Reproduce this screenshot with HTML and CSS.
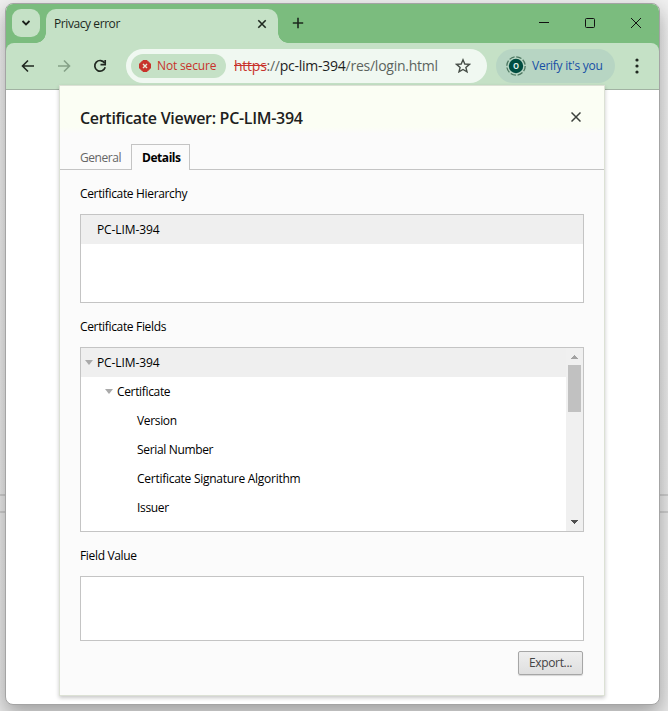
FILE: index.html
```html
<!DOCTYPE html>
<html lang="en">
<head>
<meta charset="utf-8">
<title>Privacy error</title>
<link rel="stylesheet" href="styles.css">
</head>
<body>
<div class="window">
  <div class="titlebar">
    <button class="tab-search" aria-label="Search tabs"><svg width="28" height="28" viewBox="0 0 28 28"><path d="M10.500 12l3.500 3.500 3.500-3.500" fill="none" stroke="#1c211c" stroke-width="1.800"/></svg></button>
    <div class="tab">
      <span class="tab-title">Privacy error</span>
      <svg width="10" height="10" viewBox="0 0 10 10"><path d="M1.300 1.300l7.400 7.400M8.700 1.300L1.300 8.700" stroke="#1f2a20" stroke-width="1.600"/></svg>
    </div>
    <svg class="new-tab" width="12" height="12" viewBox="0 0 12 12"><path d="M6 .8v10.400M.8 6h10.400" stroke="#1c281d" stroke-width="1.600"/></svg>
    <div class="controls">
      <svg width="46" height="39" viewBox="0 0 46 39"><path d="M18 18.500h10" stroke="#111"/></svg>
      <svg width="46" height="39" viewBox="0 0 46 39"><rect x="18.500" y="14.500" width="9" height="9" rx="1" fill="none" stroke="#111"/></svg>
      <svg width="46" height="39" viewBox="0 0 46 39"><path d="M18 14l10 10M28 14L18 24" stroke="#111"/></svg>
    </div>
  </div>
  <div class="toolbar">
    <svg class="nav" width="14" height="14" viewBox="0 0 14 14"><path d="M13 7H2M7 1.500L1.500 7 7 12.500" fill="none" stroke="#202820" stroke-width="1.600"/></svg>
    <svg class="nav" width="14" height="14" viewBox="0 0 14 14"><path d="M1 7h11M7 1.500L12.500 7 7 12.500" fill="none" stroke="#85a187" stroke-width="1.600"/></svg>
    <svg class="nav" width="14" height="14" viewBox="0 0 14 14"><path d="M11.600 4A5.300 5.300 0 1 0 12.200 8.300" fill="none" stroke="#202820" stroke-width="1.700"/><path d="M12.200 1v4.700H7.500" fill="none" stroke="#202820" stroke-width="1.700"/></svg>
    <div class="omnibox">
      <div class="chip">
        <svg width="12" height="12" viewBox="0 0 12 12"><path d="M4 .5h4L11.500 4v4L8 11.500H4L.5 8V4z" fill="#c8322b" stroke="#c8322b" stroke-linejoin="round"/><path d="M4 4l4 4M8 4L4 8" stroke="#e6ead9" stroke-width="1.400"/></svg>
        <span>Not secure</span>
      </div>
      <span class="url"><s>https</s><i>://</i>pc-lim-394<i>/res/login.html</i></span>
      <svg class="star" width="16" height="16" viewBox="0 0 16 16"><path d="M8 1.800l1.800 4.200 4.600.4-3.500 3 1.100 4.500L8 11.500l-4 2.400 1.100-4.500-3.500-3 4.600-.4z" fill="none" stroke="#464d47" stroke-width="1.400"/></svg>
    </div>
    <div class="profile">
      <svg width="20" height="20" viewBox="0 0 20 20"><circle cx="10" cy="10" r="9.200" fill="none" stroke="#4c7660" stroke-width="1.300" stroke-dasharray="5.500 1.720"/><circle cx="10" cy="10" r="7.200" fill="#004d40"/><text x="10" y="13" text-anchor="middle">o</text></svg>
      <span>Verify it's you</span>
    </div>
    <svg class="menu" width="4" height="16" viewBox="0 0 4 16"><g fill="#202820"><circle cx="2" cy="2" r="1.600"/><circle cx="2" cy="8" r="1.600"/><circle cx="2" cy="14" r="1.600"/></g></svg>
  </div>
</div>
<div class="dialog">
  <div class="dialog-header"><h1>Certificate Viewer: PC-LIM-394</h1>
    <svg width="10" height="10" viewBox="0 0 10 10"><path d="M.5.5l9 9M9.500.5l-9 9" stroke="#3c413c" stroke-width="1.500"/></svg></div>
  <div class="tabs"><span class="general">General</span><span class="details">Details</span></div>
  <div class="content">
    <div class="label"><span>Certificate Hierarchy</span></div>
    <div class="box hierarchy"><div class="row selected"><span class="host">PC-LIM-394</span></div></div>
    <div class="label"><span>Certificate Fields</span></div>
    <div class="box fields">
      <div class="tree">
        <div class="row selected"><i class="arrow"></i><span class="host">PC-LIM-394</span></div>
        <div class="row level-1"><i class="arrow"></i><span>Certificate</span></div>
        <div class="row level-2"><span>Version</span></div>
        <div class="row level-2"><span>Serial Number</span></div>
        <div class="row level-2"><span class="algorithm">Certificate Signature Algorithm</span></div>
        <div class="row level-2"><span>Issuer</span></div>
      </div>
      <div class="scrollbar">
        <svg width="17" height="17" viewBox="0 0 17 17" shape-rendering="crispEdges"><path d="M5 11h7L8.500 7z" fill="#a3a3a3"/></svg>
        <div class="thumb"></div>
        <svg class="down" width="17" height="17" viewBox="0 0 17 17" shape-rendering="crispEdges"><path d="M5 6h7L8.500 10z" fill="#505050"/></svg>
      </div>
    </div>
    <div class="label"><span>Field Value</span></div>
    <div class="box value"></div>
    <button class="export"><span>Export...</span></button>
  </div>
</div>
</body>
</html>
```
FILE: styles.css
```css
* { box-sizing: border-box; }
body {
  margin: 0;
  width: 668px;
  height: 711px;
  padding: 3px 8px 6px 5px;
  overflow: hidden;
  position: relative;
  font: 12px/16px "Open Sans", "Noto Sans", sans-serif;
  letter-spacing: -0.34px;
  color: #000;
  background:
    linear-gradient(#cecece, #cecece) 0 494px / 100% 2px no-repeat,
    linear-gradient(#cecece, #cecece) 0 511px / 100% 2px no-repeat,
    linear-gradient(#f0f0f0, #e8e8e8);
}
svg { display: block; flex: none; }
button { padding: 0; border: 0; font: inherit; letter-spacing: inherit; }
span { white-space: nowrap; }
.window {
  width: 655px;
  height: 702px;
  border: 1px solid #a4a4a4;
  border-radius: 8px;
  background: #fff;
  overflow: hidden;
  box-shadow: 0 8px 20px rgba(0, 0, 0, .32);
}
.titlebar {
  height: 39px;
  display: flex;
  padding-left: 6px;
  background: #7bbc7e;
}
.tab-search {
  width: 28px;
  height: 28px;
  margin-top: 5px;
  border-radius: 9px;
  background: #c5e1c6;
}
.tab {
  position: relative;
  width: 232px;
  height: 34px;
  margin: 5px 0 0 6px;
  padding: 0 11px 4px 8px;
  display: flex;
  align-items: center;
  justify-content: space-between;
  border-radius: 10px 10px 0 0;
  background: #c5e1c6;
}
.tab::before, .tab::after {
  content: "";
  position: absolute;
  bottom: 0;
  width: 10px;
  height: 10px;
}
.tab::before { left: -10px; background: radial-gradient(circle at 0 0, transparent 9.5px, #c5e1c6 10px); }
.tab::after { right: -10px; background: radial-gradient(circle at 100% 0, transparent 9.5px, #c5e1c6 10px); }
.tab-title { color: #1c281d; letter-spacing: -0.42px; }
.new-tab { margin: 13px 0 0 14px; }
.controls { display: flex; margin-left: auto; }
.toolbar {
  height: 47px;
  display: flex;
  align-items: center;
  padding-left: 15px;
  border-bottom: 1px solid #a1b2a2;
  border-radius: 8px 8px 0 0;
  background: #c5e1c6;
  box-shadow: 0 -10px 0 #7bbc7e;
}
.nav { margin-right: 22px; }
.omnibox {
  width: 361px;
  height: 34px;
  margin-left: -3px;
  padding: 0 16px 0 5px;
  display: flex;
  align-items: center;
  border-radius: 17px;
  background: #f0f8f1;
}
.chip {
  width: 95px;
  height: 24px;
  padding-left: 8px;
  display: flex;
  align-items: center;
  gap: 6px;
  border-radius: 12px;
  background: #c5e1c6;
  color: #c8322b;
  font-weight: 500;
  letter-spacing: -0.16px;
}
.url { margin-left: 8px; font-size: 14px; letter-spacing: -0.25px; color: #1d221e; }
.url i { font-style: normal; color: #5c645e; }
.url s { color: #c8322b; }
.star { margin-left: auto; }
.profile {
  width: 119px;
  height: 34px;
  margin-left: 9px;
  padding-left: 10px;
  display: flex;
  align-items: center;
  gap: 6px;
  border-radius: 17px;
  background: #b7d5c3;
  color: #164fa5;
  letter-spacing: -0.25px;
}
.profile text { font-size: 10px; font-weight: 600; fill: #e4f2ed; }
.menu { margin-left: 20px; }
.dialog {
  position: absolute;
  left: 59px;
  top: 85px;
  width: 546px;
  height: 611px;
  border: 1px solid #dce1d5;
  background: #fbfbfb;
  box-shadow: 0 2px 4px rgba(0, 0, 0, .22);
}
.dialog-header {
  height: 58px;
  padding: 6px 23px 0 20px;
  display: flex;
  align-items: center;
  justify-content: space-between;
  background: linear-gradient(#fbfef4 70%, #fbfbfb 82%);
}
.dialog-header svg { margin-bottom: 2px; }
h1 { margin: 0; font-size: 16px; line-height: 22px; font-weight: 600; letter-spacing: -0.3px; color: #1d211d; }
.tabs {
  height: 26px;
  display: flex;
  padding-left: 20px;
  border-bottom: 1px solid #c4c4c4;
}
.general { padding-top: 6px; width: 51px; color: #666; letter-spacing: -0.45px; }
.details {
  width: 59px;
  height: 26px;
  padding: 5px 0 0 10px;
  border: 1px solid #c4c4c4;
  border-bottom: 0;
  background: #fbfbfb;
  font-weight: 700;
  letter-spacing: -0.45px;
}
.content { padding: 15px 20px 0; }
.label { height: 29px; padding-top: 1px; }
.box { width: 504px; border: 1px solid #c4c4c4; background: #fff; }
.hierarchy { height: 89px; margin-bottom: 15px; }
.fields { height: 185px; margin-bottom: 15px; display: flex; }
.value { height: 65px; }
.tree { flex: 1; }
.row { height: 29px; display: flex; align-items: center; padding-left: 4px; }
.selected { background: #efefef; }
.host { letter-spacing: -0.1px; }
.algorithm { letter-spacing: -0.27px; }
.hierarchy .row { padding-left: 16px; }
.level-1 { padding-left: 24px; }
.level-2 { padding-left: 56px; }
.arrow {
  width: 8px;
  margin-right: 4px;
  border: solid transparent;
  border-width: 5px 4px 0;
  border-top-color: #aaa;
}
.scrollbar { width: 17px; display: flex; flex-direction: column; background: #f0f0f0; }
.thumb { width: 13px; height: 47px; margin-left: 2px; background: #c1c1c1; }
.down { margin-top: auto; }
.export {
  display: block;
  width: 65px;
  height: 24px;
  margin: 10px 0 0 438px;
  border: 1px solid #a6a6a6;
  border-radius: 2px;
  background: linear-gradient(#eee, #dfdfdf);
  box-shadow: 0 1px 1px rgba(0, 0, 0, .15);
  color: #444;
}
```
